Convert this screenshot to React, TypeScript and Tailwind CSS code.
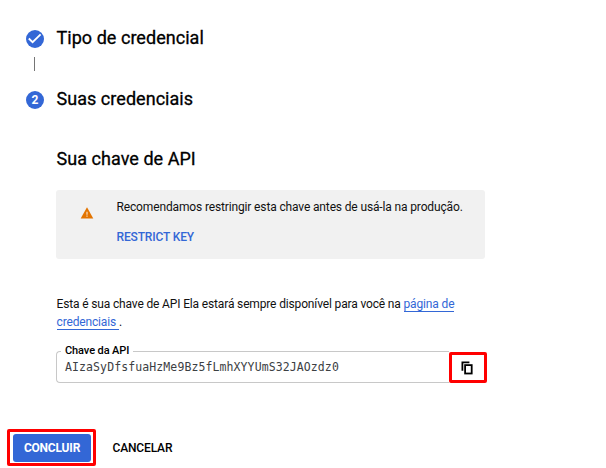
import type { ReactNode } from "react";

function Step({ icon, title }: { icon: ReactNode; title: string }) {
  return (
    <div className="flex h-6 items-center pl-[26px]">
      <span className="mt-px flex size-[18px] shrink-0 items-center justify-center rounded-full bg-[#3367d6] text-[12px] font-bold text-white">
        {icon}
      </span>
      <h2 className="ml-[12.5px] whitespace-nowrap text-[18px] leading-6 tracking-[0.04px] [-webkit-text-stroke:0.3px_black]">{title}</h2>
    </div>
  );
}

function CheckIcon() {
  return (
    <svg width="18" height="18" viewBox="0 0 18 18" fill="none" stroke="#fff" strokeWidth="1.8">
      <path d="M2.8 8.5 6.6 12.2 14.6 4.4" />
    </svg>
  );
}

function WarningIcon() {
  return (
    <svg width="14" height="12" viewBox="0 0 14 12">
      <path d="M7 .3 13.3 11.5H.7Z" fill="#e37400" />
      <path d="M6.3 4.7h1.4v3H6.3zM6.3 8.6h1.4v1.2H6.3z" fill="#f6cfa4" />
    </svg>
  );
}

function CopyIcon() {
  return (
    <svg className="mr-0.5" width="12" height="14" viewBox="0 0 12 14" fill="none" stroke="#000" strokeWidth="1.8">
      <path d="M1.4 9.8V1.4H8.4" />
      <rect x="4.1" y="4.1" width="6.6" height="8.4" />
    </svg>
  );
}

export default function App() {
  return (
    <main className="flex h-[468px] w-[606px] flex-col overflow-hidden bg-white pt-[26px] font-['Roboto',sans-serif] text-[12px] text-black">
      <Step icon={<CheckIcon />} title="Tipo de credencial" />
      <div className="mt-[7px] ml-[34px] h-[14px] w-px bg-[#757575]" />
      <div className="mt-4">
        <Step icon="2" title="Suas credenciais" />
      </div>

      <section className="mt-9 ml-14 w-[431px]">
        <h2 className="pl-[0.5px] text-[18px] leading-6 tracking-[0.04px] [-webkit-text-stroke:0.3px_black]">Sua chave de API</h2>

        <div className="mt-[19px] flex h-[69px] w-[429px] rounded-[3px] bg-[#f1f1f1] text-[#111]">
          <div className="w-[60.5px] shrink-0 pt-[17px] pl-6">
            <WarningIcon />
          </div>
          <div className="pt-2 leading-[18px]">
            <p className="whitespace-nowrap tracking-[-0.14px]">Recomendamos restringir esta chave antes de usá-la na produção.</p>
            <button className="mt-3 block font-medium leading-[18px] tracking-[-0.14px] text-[#3367d6]">RESTRICT KEY</button>
          </div>
        </div>

        <p className="mt-9 whitespace-nowrap pl-[0.5px] leading-[18px] tracking-[-0.15px] text-[#111]">
          Esta é sua chave de API Ela estará sempre disponível para você na{" "}
          <a className="border-b border-[#3367d6] text-[#3367d6]">página de</a>
          <br />
          <a className="whitespace-pre border-b border-[#3367d6] text-[#3367d6]">credenciais </a>.
        </p>

        <div className="mt-[11px] flex h-[41px] items-end">
          <fieldset className="h-[40px] w-[393px] rounded-l-[4px] border border-r-0 border-[#c8c8c8] pl-1">
            <legend className="h-4 px-1 text-[11px] font-medium leading-4 tracking-[-0.1px]">Chave da API</legend>
            <p className="pl-1 font-['DejaVu_Sans_Mono',monospace] text-[11.5px] leading-4 tracking-[0.1px] text-[#3c4043]">
              AIzaSyDfsfuaHzMe9Bz5fLmhXYYUmS32JAOzdz0
            </p>
          </fieldset>
          <button className="flex h-[31px] w-[38px] items-center justify-center rounded-[2px] border-3 border-[#ff0000]">
            <CopyIcon />
          </button>
        </div>
      </section>

      <div className="mt-[46px] ml-[7px] flex items-center">
        <div className="flex h-[37px] w-[89px] items-center justify-center rounded-[2px] border-3 border-[#ff0000]">
          <button className="h-7 w-[78px] rounded-[3px] bg-[#3367d6] pl-px font-bold tracking-[-0.2px] text-white">CONCLUIR</button>
        </div>
        <button className="ml-[16.5px] font-medium tracking-[-0.15px]">CANCELAR</button>
      </div>
    </main>
  );
}
